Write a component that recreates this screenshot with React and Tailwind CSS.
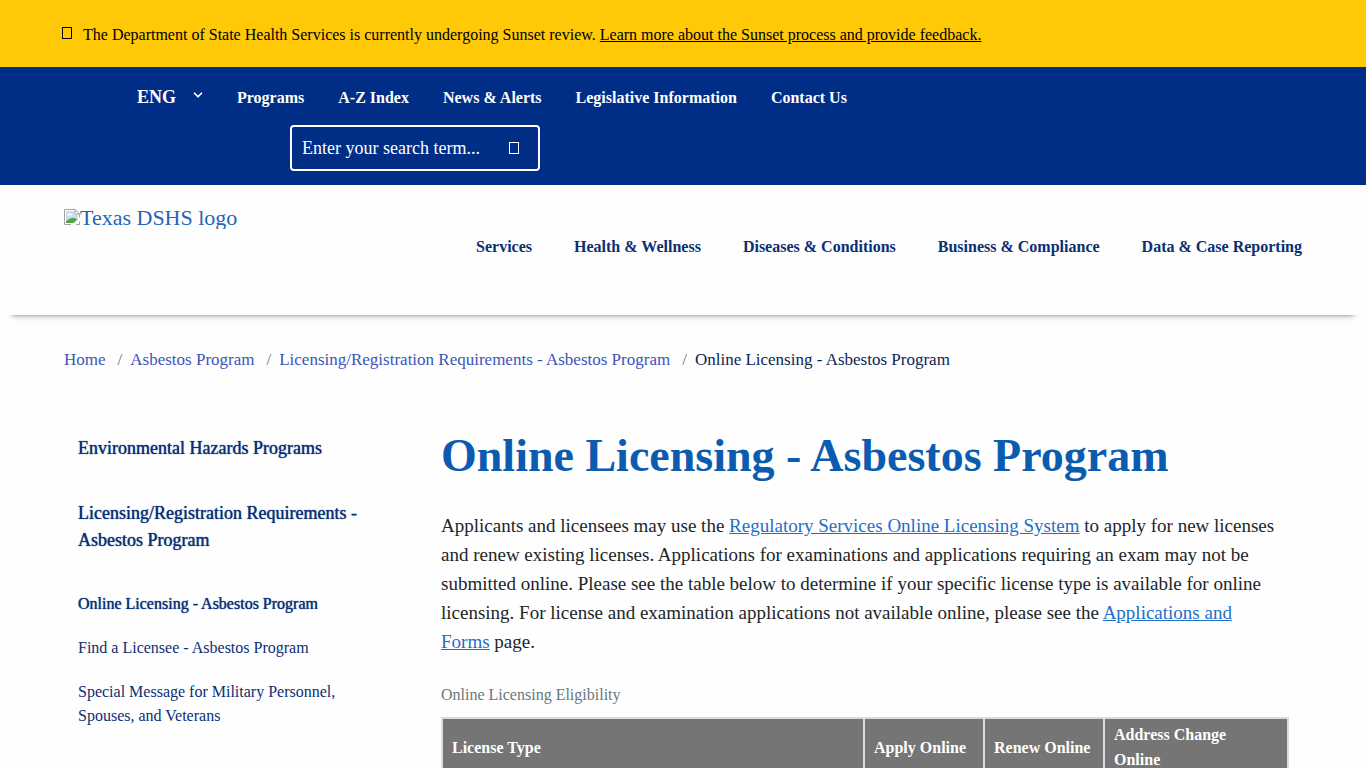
import React, { useState } from 'react';
import { ChevronDown } from 'lucide-react';

const TOP_LINKS = ['Programs', 'A-Z Index', 'News & Alerts', 'Legislative Information', 'Contact Us'];

const MAIN_LINKS = [
  'Services',
  'Health & Wellness',
  'Diseases & Conditions',
  'Business & Compliance',
  'Data & Case Reporting',
];

const CRUMBS = ['Home', 'Asbestos Program', 'Licensing/Registration Requirements - Asbestos Program'];

// Small empty box shown in place of an icon-font glyph
function GlyphBox() {
  return <span aria-hidden="true" className="block h-3 w-[10px] shrink-0 border border-current" />;
}

function BrokenImage() {
  return (
    <svg width="16" height="16" viewBox="0 0 16 16" className="shrink-0" aria-hidden="true">
      <path d="M0.5 0.5H11L15.5 5V15.5H0.5Z" fill="#fff" />
      <path d="M2 2H10.500V5.500H14V14H2Z" fill="#c9dcf5" />
      <path d="M3 6.500C3 5 4.500 4.500 5 5C6 3.500 8 4.500 8 6.500Z" fill="#fff" />
      <path d="M2 14V12.500C4 10 7 8.500 9.500 9C11.500 9.300 13 10 14 11V14Z" fill="#4fa548" />
      <path d="M16 8.500L7 16H11L16 12Z" fill="#fff" />
      <path d="M7 15.500H0.500V0.500H11L15.500 5V8.500M15.500 12.500V15.500H12" fill="none" stroke="#a3a3a3" />
      <path d="M11 0.500V5H15.500Z" fill="#fff" stroke="#a3a3a3" />
    </svg>
  );
}

function TopBar() {
  const [lang, setLang] = useState('ENG');
  const [term, setTerm] = useState('');

  return (
    <div className="bg-[#002d86] pt-4 pb-[14px] text-white">
      <div className="flex items-center pl-[137px]">
        <div className="relative mr-8 flex items-center">
          <select
            aria-label="Language"
            value={lang}
            onChange={e => setLang(e.target.value)}
            className="w-[68px] appearance-none bg-transparent text-lg font-bold outline-none"
          >
            <option>ENG</option>
            <option>ESP</option>
          </select>
          <ChevronDown size={14} strokeWidth={3} className="pointer-events-none absolute right-0 -mt-1" />
        </div>
        <nav className="flex gap-[34px] pt-0.5 text-base font-bold">
          {TOP_LINKS.map(l => <a key={l} href="#">{l}</a>)}
        </nav>
      </div>

      <form
        onSubmit={e => e.preventDefault()}
        className="mt-[14px] ml-[290px] flex h-[46px] w-[250px] items-center rounded border-2 border-white"
      >
        <input
          type="text"
          aria-label="Search"
          placeholder="Enter your search term..."
          value={term}
          onChange={e => setTerm(e.target.value)}
          className="min-w-0 flex-1 bg-transparent pl-[10px] text-lg text-white outline-none placeholder:text-white"
        />
        <button type="submit" aria-label="Submit search" className="px-[19px]"><GlyphBox /></button>
      </form>
    </div>
  );
}

export default function App() {
  return (
    <div className="min-h-screen bg-[#fefefe] font-['Liberation_Serif',serif] text-[#212529]">

      {/* Notice */}
      <div className="flex items-start gap-[11px] bg-[#ffc907] px-[62px] pt-[23px] pb-5 text-base text-black">
        <div className="pt-1"><GlyphBox /></div>
        <p>
          The Department of State Health Services is currently undergoing Sunset review.{' '}
          <a href="#" className="underline">Learn more about the Sunset process and provide feedback.</a>
        </p>
      </div>

      <TopBar />

      {/* Header */}
      <header className="flex items-start justify-between px-16 pt-6 pb-14 shadow-[0_12px_6px_-12px_#777]">
        <a href="#" className="flex h-5 items-start overflow-hidden text-[22px] leading-[18px] text-[#2366b8]">
          <BrokenImage />
          Texas DSHS logo
        </a>
        <nav className="flex gap-[42px] pt-[26px] text-base font-bold text-[#0a2f73]">
          {MAIN_LINKS.map(l => <a key={l} href="#">{l}</a>)}
        </nav>
      </header>

      {/* Breadcrumb */}
      <nav aria-label="Breadcrumb" className="px-16 pt-8">
        <ol className="flex text-[17px] leading-[25px]">
          {CRUMBS.map(c => (
            <li key={c} className="flex">
              <a href="#" className="text-[#3b55b9]">{c}</a>
              <span className="mr-2 ml-3 text-[#6c757d]">/</span>
            </li>
          ))}
          <li className="text-[#0a2556]">Online Licensing - Asbestos Program</li>
        </ol>
      </nav>

      <div className="flex px-16 pt-[55px]">
        {/* Sidebar */}
        <aside className="w-[377px] shrink-0 pr-16 pl-[14px] text-[#0b2f74]">
          <div className="flex flex-col gap-[38px] pt-2 text-lg leading-[27px] [text-shadow:0_0_1px_currentColor]">
            <a href="#">Environmental Hazards Programs</a>
            <a href="#">Licensing/Registration Requirements - Asbestos Program</a>
          </div>
          <ul className="mt-[38px] flex flex-col gap-5 text-base leading-6">
            <li><a href="#" className="[text-shadow:0_0_1px_currentColor]">Online Licensing - Asbestos Program</a></li>
            <li><a href="#">Find a Licensee - Asbestos Program</a></li>
            <li><a href="#">Special Message for Military Personnel, Spouses, and Veterans</a></li>
          </ul>
        </aside>

        {/* Content */}
        <main className="min-w-0 flex-1">
          <h1 className="text-[46px] leading-[58px] font-bold text-[#0b5cb0]">Online Licensing - Asbestos Program</h1>
          <p className="mt-[26px] max-w-[840px] text-[19px] leading-[29px]">
            Applicants and licensees may use the{' '}
            <a href="#" className="text-[#1f6fc8] underline">Regulatory Services Online Licensing System</a>{' '}
            to apply for new licenses and renew existing licenses. Applications for examinations and applications
            requiring an exam may not be submitted online. Please see the table below to determine if your specific
            license type is available for online licensing. For license and examination applications not available
            online, please see the <a href="#" className="text-[#1f6fc8] underline">Applications and Forms</a> page.
          </p>

          <table className="mt-[26px] w-full max-w-[848px] table-fixed border-collapse text-base leading-[25px]">
            <caption className="pb-[10px] text-left text-[#6c757d]">Online Licensing Eligibility</caption>
            <thead>
              <tr className="bg-[#757575] text-left text-white">
                <th className="border-2 border-[#dcdcdc] px-[9px] py-[3px]">License Type</th>
                <th className="w-[120px] border-2 border-[#dcdcdc] px-[9px] py-[3px]">Apply Online</th>
                <th className="w-[120px] border-2 border-[#dcdcdc] px-[9px] py-[3px]">Renew Online</th>
                <th className="w-[184px] border-2 border-[#dcdcdc] py-[3px] pr-8 pl-[9px]">Address Change Online</th>
              </tr>
            </thead>
          </table>
        </main>
      </div>
    </div>
  );
}
